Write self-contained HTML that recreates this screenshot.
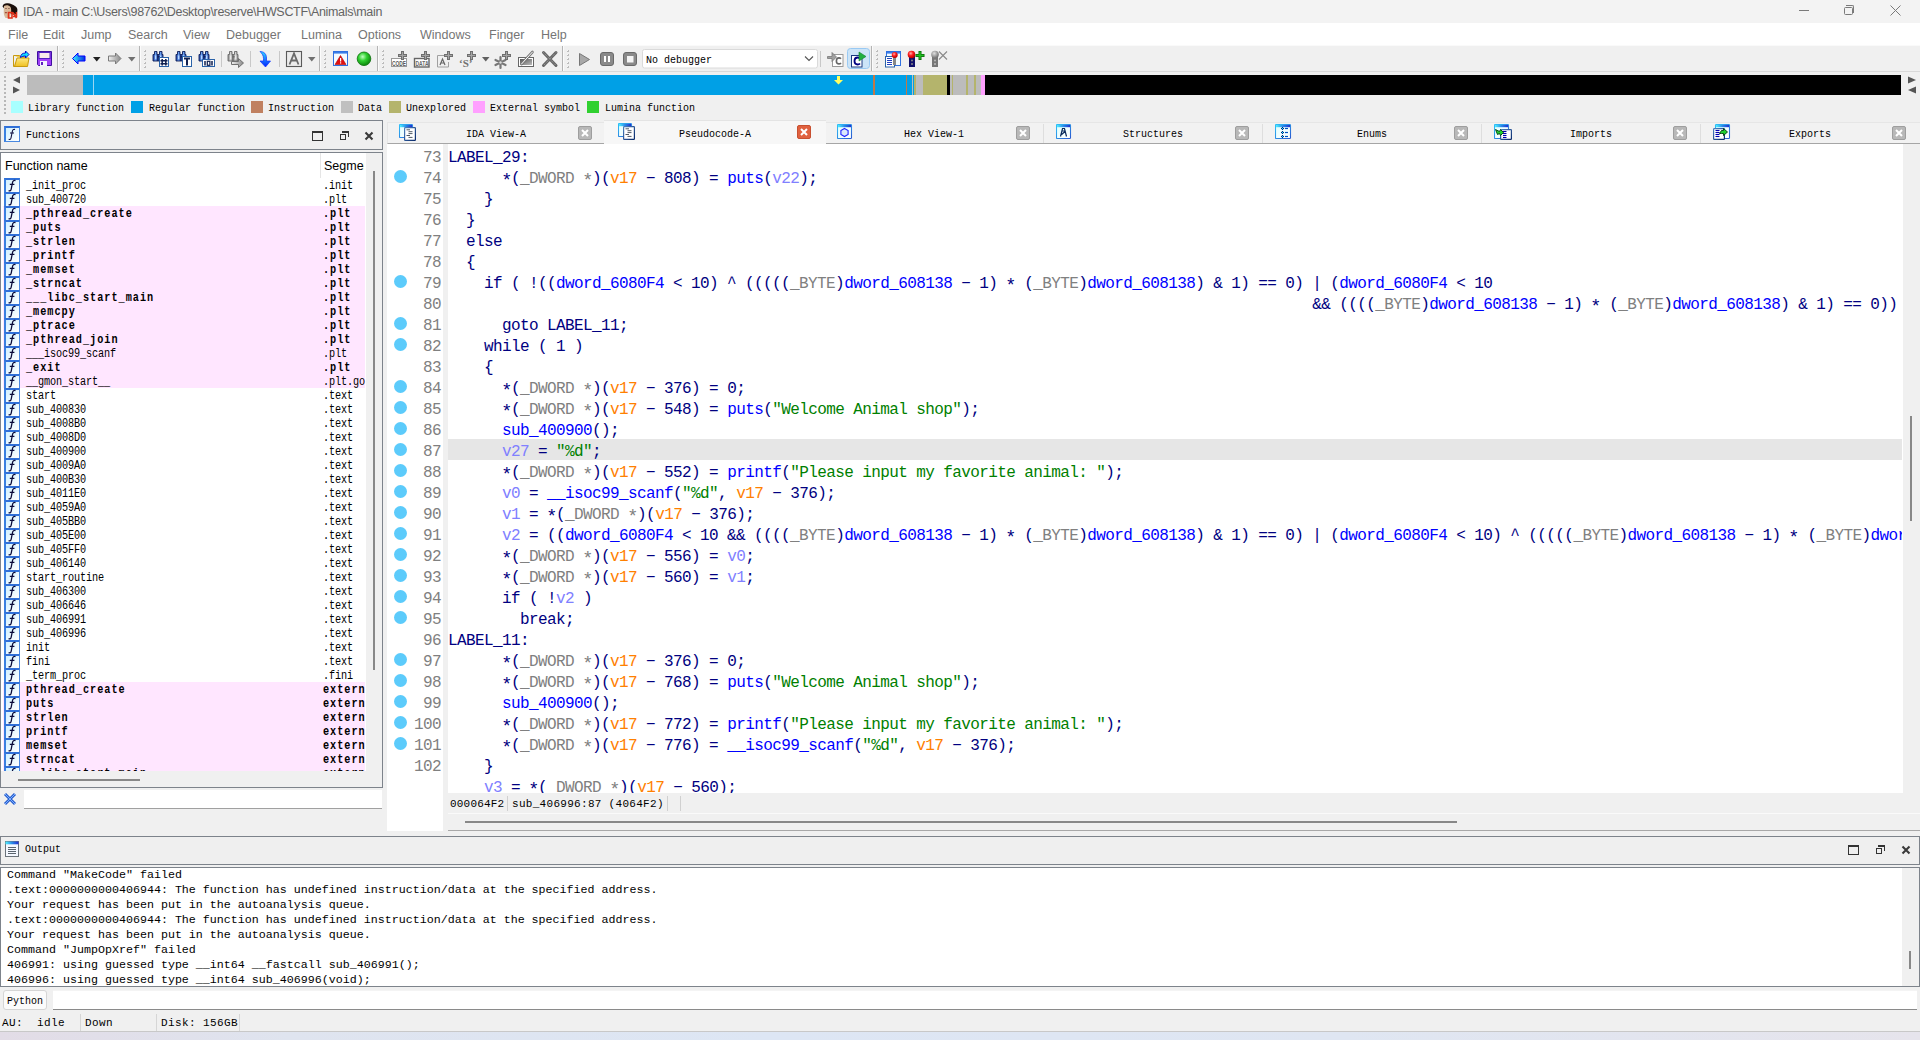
<!DOCTYPE html><html><head><meta charset="utf-8"><style>
*{margin:0;padding:0;box-sizing:border-box}
html,body{width:1920px;height:1040px;overflow:hidden;background:#f0f0f0;font-family:"Liberation Sans",sans-serif;position:relative}
div,span,svg{position:absolute}
.mono{font-family:"Liberation Mono",monospace}
.nw{white-space:nowrap}
#title{left:0;top:0;width:1920px;height:23px;background:#f3f3f3}
#menu{left:0;top:23px;width:1920px;height:22px;background:#fff}
#menu span{top:5px;font-size:12.5px;color:#757575;white-space:nowrap}
.sep{width:1px;background:#cfcfcf}
.hd{width:2px;background:repeating-linear-gradient(#b8b8b8 0 2px,transparent 2px 4px)}
.leg{top:101px;width:12px;height:12px}
.bm{font-family:"Liberation Mono",monospace;white-space:nowrap;color:#000}
.ln{left:389px;width:53px;text-align:right;font-size:16px;letter-spacing:-0.6px;color:#808080;font-family:"Liberation Mono",monospace;height:21px;line-height:21px}
.cl{left:448px;width:1454px;font-size:16px;letter-spacing:-0.6px;white-space:pre;font-family:"Liberation Mono",monospace;height:21px;line-height:21px;overflow:hidden;color:#000080}
.dot{left:394px;width:13px;height:13px;border-radius:50%;background:#5ccbfb}
.cl span{position:static}.cl i{position:static;font-style:normal}.st{display:inline-block;transform:translateY(2px) scale(1.15)}
.k{color:#000080}.f{color:#0000ff}.ty{color:#808080}.o{color:#ff8000}.v{color:#8080ff}.s{color:#008000}
.fr{left:3px;width:362px;height:14px}
.fi{left:4px;width:16px;height:15px;border:1px solid #4a88e0;background:linear-gradient(135deg,#d0f0ff,#ffffff);border-top:2px solid #3070d8;border-left:2px solid #3a80e0}
.fn{left:26px;top:1px;font-size:12px;line-height:14px;letter-spacing:-0.14px;transform:scaleX(0.85);transform-origin:0 0}
.fs{left:323px;top:1px;font-size:12px;line-height:14px;letter-spacing:-0.14px;transform:scaleX(0.85);transform-origin:0 0}
.b{font-weight:bold;letter-spacing:1.18px!important}
.tab{top:123px;height:21px;background:#f0f0f0;border-bottom:1px solid #a8a8a8}
.tabt{top:3px;font-size:12px;letter-spacing:-1.2px;font-weight:bold}
.cx{top:3px;width:14px;height:14px;border-radius:2px;background:#b9b9b9;border:1px solid #a4a4a4}
.out{left:7px;font-size:11.67px;font-family:"Liberation Mono",monospace;white-space:pre;color:#000;line-height:15px;height:15px}
</style></head><body>
<div id="title"></div>
<div style="left:23px;top:5px;font-size:12.5px;letter-spacing:-0.32px;color:#646464" class="nw">IDA - main C:\Users\98762\Desktop\reserve\HWSCTF\Animals\main</div>
<svg style="left:0;top:0" width="22" height="22" viewBox="0 0 22 22"><path d="M2.5 6.5C3 4 5 3 7.5 3.2 10 3 13 4.5 15 6c2 1 2.8 3 2.3 5.5-.3 2-1.5 3-2.5 3.5L8 13z" fill="#1a0e0a"/><path d="M4 6c2-1.5 5-1 6.5 1 1 2 .8 5 .2 7-.5 2-1 3.5-1.5 4H5.5C4 16 3.5 13 3.8 10z" fill="#d8b898"/><path d="M5 8.5h2M8 8.5h1.8" stroke="#9a7060" stroke-width="1"/><path d="M5 12.5c.6.3 1.2.3 1.8 0" stroke="#a04030" stroke-width="1.1"/><path d="M8.5 12.5h3.5v5.5H8.5zM13 12.5l3.5 5.5M13 16.5h3.5V12" stroke="#e03018" stroke-width="1.6" fill="none"/></svg>
<div style="left:1799px;top:10px;width:10px;height:1px;background:#7a7a7a"></div>
<div style="left:1844px;top:7px;width:9px;height:8px;border:1px solid #7a7a7a;border-radius:1.5px"></div>
<div style="left:1846px;top:5px;width:8px;height:8px;border-top:1px solid #7a7a7a;border-right:1px solid #7a7a7a;border-top-right-radius:2px"></div>
<svg style="left:1890px;top:5px" width="11" height="11"><path d="M0.5 0.5L10.5 10.5M10.5 0.5L0.5 10.5" stroke="#7a7a7a" stroke-width="1"/></svg>
<div id="menu">
<span style="left:8px">File</span>
<span style="left:43px">Edit</span>
<span style="left:81px">Jump</span>
<span style="left:128px">Search</span>
<span style="left:183px">View</span>
<span style="left:226px">Debugger</span>
<span style="left:301px">Lumina</span>
<span style="left:358px">Options</span>
<span style="left:420px">Windows</span>
<span style="left:489px">Finger</span>
<span style="left:541px">Help</span>
</div>
<div style="left:0;top:45px;width:1920px;height:27px;background:#f0f0f0;border-bottom:1px solid #d9d9d9"></div>
<div style="left:0;top:45px;width:1920px;height:1px;background:#fafafa"></div>
<svg width="0" height="0" style="left:0;top:0"><defs>
<linearGradient id="wTitle" x1="0" y1="0" x2="1" y2="0"><stop offset="0" stop-color="#50f0ff"/><stop offset="0.5" stop-color="#2a8ae8"/><stop offset="1" stop-color="#2030d0"/></linearGradient>
<linearGradient id="wBody" x1="0" y1="0" x2="1" y2="1"><stop offset="0" stop-color="#e0ffff"/><stop offset="1" stop-color="#ffffff"/></linearGradient>
<linearGradient id="wEdge" x1="0" y1="0" x2="1" y2="1"><stop offset="0" stop-color="#30c0f8"/><stop offset="1" stop-color="#2a5ad0"/></linearGradient>
<linearGradient id="dEdge" x1="0" y1="0" x2="1" y2="1"><stop offset="0" stop-color="#4a80c0"/><stop offset="1" stop-color="#0a2a6a"/></linearGradient>
</defs></svg>
<!--TOOLBAR-->
<svg style="left:0;top:0" width="960" height="75" viewBox="0 0 960 75"><defs>
<linearGradient id="gFold" x1="0" y1="0" x2="0" y2="1"><stop offset="0" stop-color="#fff4a0"/><stop offset="1" stop-color="#f0c020"/></linearGradient>
<linearGradient id="gBlue" x1="0" y1="0" x2="1" y2="0"><stop offset="0" stop-color="#40f0ff"/><stop offset="1" stop-color="#0030e0"/></linearGradient>
<linearGradient id="gGrey" x1="0" y1="0" x2="1" y2="0"><stop offset="0" stop-color="#f0f0f0"/><stop offset="1" stop-color="#888"/></linearGradient>
<linearGradient id="gBin2" x1="0" y1="0" x2="1" y2="0"><stop offset="0" stop-color="#1a3a9a"/><stop offset="0.5" stop-color="#6aa0f0"/><stop offset="1" stop-color="#1a3a9a"/></linearGradient><linearGradient id="gBinG" x1="0" y1="0" x2="1" y2="0"><stop offset="0" stop-color="#888"/><stop offset="0.5" stop-color="#d0d0d0"/><stop offset="1" stop-color="#888"/></linearGradient>
<linearGradient id="gDown" x1="0" y1="0" x2="0" y2="1"><stop offset="0" stop-color="#30e0ff"/><stop offset="1" stop-color="#0020ff"/></linearGradient>
<radialGradient id="gGreen" cx="0.4" cy="0.35" r="0.6"><stop offset="0" stop-color="#c0ffc0"/><stop offset="0.5" stop-color="#30d030"/><stop offset="1" stop-color="#109010"/></radialGradient>
<radialGradient id="gRed" cx="0.4" cy="0.35" r="0.6"><stop offset="0" stop-color="#ffb0b0"/><stop offset="0.5" stop-color="#ff2020"/><stop offset="1" stop-color="#c00000"/></radialGradient>
<radialGradient id="gGb" cx="0.4" cy="0.35" r="0.6"><stop offset="0" stop-color="#e0e0e0"/><stop offset="1" stop-color="#777"/></radialGradient>
<linearGradient id="gPen" x1="0" y1="0" x2="1" y2="1"><stop offset="0" stop-color="#555"/><stop offset="1" stop-color="#bbb"/></linearGradient>
</defs><rect x="57.0" y="46" width="1" height="25" fill="#b4b4b4"/><rect x="58.0" y="46" width="1" height="25" fill="#fbfbfb"/><rect x="139.0" y="46" width="1" height="25" fill="#b4b4b4"/><rect x="140.0" y="46" width="1" height="25" fill="#fbfbfb"/><rect x="319.0" y="46" width="1" height="25" fill="#b4b4b4"/><rect x="320.0" y="46" width="1" height="25" fill="#fbfbfb"/><rect x="377.0" y="46" width="1" height="25" fill="#b4b4b4"/><rect x="378.0" y="46" width="1" height="25" fill="#fbfbfb"/><rect x="562.0" y="46" width="1" height="25" fill="#b4b4b4"/><rect x="563.0" y="46" width="1" height="25" fill="#fbfbfb"/><rect x="871.0" y="46" width="1" height="25" fill="#b4b4b4"/><rect x="872.0" y="46" width="1" height="25" fill="#fbfbfb"/><rect x="221.0" y="51" width="1" height="16" fill="#c8c8c8"/><rect x="250.0" y="51" width="1" height="16" fill="#c8c8c8"/><rect x="279.0" y="51" width="1" height="16" fill="#c8c8c8"/><rect x="820.0" y="51" width="1" height="16" fill="#c8c8c8"/><rect x="4" y="50" width="2" height="2" fill="#bcbcbc"/><rect x="4" y="50" width="1" height="1" fill="#f8f8f8"/><rect x="4" y="54" width="2" height="2" fill="#bcbcbc"/><rect x="4" y="54" width="1" height="1" fill="#f8f8f8"/><rect x="4" y="58" width="2" height="2" fill="#bcbcbc"/><rect x="4" y="58" width="1" height="1" fill="#f8f8f8"/><rect x="4" y="62" width="2" height="2" fill="#bcbcbc"/><rect x="4" y="62" width="1" height="1" fill="#f8f8f8"/><rect x="4" y="66" width="2" height="2" fill="#bcbcbc"/><rect x="4" y="66" width="1" height="1" fill="#f8f8f8"/><rect x="62" y="50" width="2" height="2" fill="#bcbcbc"/><rect x="62" y="50" width="1" height="1" fill="#f8f8f8"/><rect x="62" y="54" width="2" height="2" fill="#bcbcbc"/><rect x="62" y="54" width="1" height="1" fill="#f8f8f8"/><rect x="62" y="58" width="2" height="2" fill="#bcbcbc"/><rect x="62" y="58" width="1" height="1" fill="#f8f8f8"/><rect x="62" y="62" width="2" height="2" fill="#bcbcbc"/><rect x="62" y="62" width="1" height="1" fill="#f8f8f8"/><rect x="62" y="66" width="2" height="2" fill="#bcbcbc"/><rect x="62" y="66" width="1" height="1" fill="#f8f8f8"/><rect x="144" y="50" width="2" height="2" fill="#bcbcbc"/><rect x="144" y="50" width="1" height="1" fill="#f8f8f8"/><rect x="144" y="54" width="2" height="2" fill="#bcbcbc"/><rect x="144" y="54" width="1" height="1" fill="#f8f8f8"/><rect x="144" y="58" width="2" height="2" fill="#bcbcbc"/><rect x="144" y="58" width="1" height="1" fill="#f8f8f8"/><rect x="144" y="62" width="2" height="2" fill="#bcbcbc"/><rect x="144" y="62" width="1" height="1" fill="#f8f8f8"/><rect x="144" y="66" width="2" height="2" fill="#bcbcbc"/><rect x="144" y="66" width="1" height="1" fill="#f8f8f8"/><rect x="324" y="50" width="2" height="2" fill="#bcbcbc"/><rect x="324" y="50" width="1" height="1" fill="#f8f8f8"/><rect x="324" y="54" width="2" height="2" fill="#bcbcbc"/><rect x="324" y="54" width="1" height="1" fill="#f8f8f8"/><rect x="324" y="58" width="2" height="2" fill="#bcbcbc"/><rect x="324" y="58" width="1" height="1" fill="#f8f8f8"/><rect x="324" y="62" width="2" height="2" fill="#bcbcbc"/><rect x="324" y="62" width="1" height="1" fill="#f8f8f8"/><rect x="324" y="66" width="2" height="2" fill="#bcbcbc"/><rect x="324" y="66" width="1" height="1" fill="#f8f8f8"/><rect x="382" y="50" width="2" height="2" fill="#bcbcbc"/><rect x="382" y="50" width="1" height="1" fill="#f8f8f8"/><rect x="382" y="54" width="2" height="2" fill="#bcbcbc"/><rect x="382" y="54" width="1" height="1" fill="#f8f8f8"/><rect x="382" y="58" width="2" height="2" fill="#bcbcbc"/><rect x="382" y="58" width="1" height="1" fill="#f8f8f8"/><rect x="382" y="62" width="2" height="2" fill="#bcbcbc"/><rect x="382" y="62" width="1" height="1" fill="#f8f8f8"/><rect x="382" y="66" width="2" height="2" fill="#bcbcbc"/><rect x="382" y="66" width="1" height="1" fill="#f8f8f8"/><rect x="567" y="50" width="2" height="2" fill="#bcbcbc"/><rect x="567" y="50" width="1" height="1" fill="#f8f8f8"/><rect x="567" y="54" width="2" height="2" fill="#bcbcbc"/><rect x="567" y="54" width="1" height="1" fill="#f8f8f8"/><rect x="567" y="58" width="2" height="2" fill="#bcbcbc"/><rect x="567" y="58" width="1" height="1" fill="#f8f8f8"/><rect x="567" y="62" width="2" height="2" fill="#bcbcbc"/><rect x="567" y="62" width="1" height="1" fill="#f8f8f8"/><rect x="567" y="66" width="2" height="2" fill="#bcbcbc"/><rect x="567" y="66" width="1" height="1" fill="#f8f8f8"/><rect x="876" y="50" width="2" height="2" fill="#bcbcbc"/><rect x="876" y="50" width="1" height="1" fill="#f8f8f8"/><rect x="876" y="54" width="2" height="2" fill="#bcbcbc"/><rect x="876" y="54" width="1" height="1" fill="#f8f8f8"/><rect x="876" y="58" width="2" height="2" fill="#bcbcbc"/><rect x="876" y="58" width="1" height="1" fill="#f8f8f8"/><rect x="876" y="62" width="2" height="2" fill="#bcbcbc"/><rect x="876" y="62" width="1" height="1" fill="#f8f8f8"/><rect x="876" y="66" width="2" height="2" fill="#bcbcbc"/><rect x="876" y="66" width="1" height="1" fill="#f8f8f8"/><path d="M13.5 55.5h6l1 1.5h5v3" fill="#f4d050" stroke="#c89a10"/><path d="M13.5 55.5v11h14l1.5-8.5h-12l-2.5 8.5" fill="url(#gFold)" stroke="#c89a10" stroke-linejoin="round"/><path d="M20.5 57.5c0-3 2-4.5 5-4.5v-2l3.5 3.5-3.5 3.5v-2c-2 0-3.5 .5-5 1.5z" fill="#10e0ff" stroke="#0010d0" stroke-width="1"/><path d="M37.5 51.5h14v14h-13l-1-1z" fill="#a040f8" stroke="#4010a0"/><rect x="39" y="52.5" width="11" height="6" fill="#f8eaea" stroke="#5020c0" stroke-width="1"/><rect x="40" y="61" width="7" height="5" fill="#f4f4ff"/><rect x="41" y="62" width="2" height="3" fill="#6020c0"/><path d="M72.5 58.5l5.5-5.5v3h7v5h-7v3z" fill="url(#gBlue)" stroke="#0000ff" stroke-linejoin="miter"/><path d="M93 57h7.5l-3.75 4.5z" fill="#202020"/><path d="M128 57h7.5l-3.75 4.5z" fill="#707070"/><path d="M308 57h7.5l-3.75 4.5z" fill="#707070"/><path d="M482 57h7.5l-3.75 4.5z" fill="#606060"/><path d="M121 58.5l-5.5-5.5v3h-7v5h7v3z" fill="url(#gGrey)" stroke="#7a7a7a"/><path d="M154.5 51.5h2.5v3h1v6.5h-5v-6.5h1.5z" fill="url(#gBin2)" stroke="#10205a" stroke-width="0.9" stroke-linejoin="round"/><rect x="155" y="55.5" width="1.3" height="3.5" fill="#b8d8ff"/><path d="M159.5 51.5h2.5v3h1v6.5h-5v-6.5h1.5z" fill="url(#gBin2)" stroke="#10205a" stroke-width="0.9" stroke-linejoin="round"/><rect x="160" y="55.5" width="1.3" height="3.5" fill="#b8d8ff"/><rect x="157.5" y="56" width="2" height="1.5" fill="#10205a"/><rect x="159.5" y="57.5" width="9" height="9" fill="#fff" stroke="#2a62a8"/><path d="M162.2 59v6.5M165.8 59v6.5M160.5 60.8h7M160.5 63.7h7" stroke="#102050" stroke-width="1.5"/><path d="M177.5 51.5h2.5v3h1v6.5h-5v-6.5h1.5z" fill="url(#gBin2)" stroke="#10205a" stroke-width="0.9" stroke-linejoin="round"/><rect x="178" y="55.5" width="1.3" height="3.5" fill="#b8d8ff"/><path d="M182.5 51.5h2.5v3h1v6.5h-5v-6.5h1.5z" fill="url(#gBin2)" stroke="#10205a" stroke-width="0.9" stroke-linejoin="round"/><rect x="183" y="55.5" width="1.3" height="3.5" fill="#b8d8ff"/><rect x="180.5" y="56" width="2" height="1.5" fill="#10205a"/><rect x="182.5" y="56.5" width="9" height="10" fill="#fff" stroke="#2a62a8"/><path d="M184 58.5h6M187 58.5v7" stroke="#102050" stroke-width="2"/><path d="M200.5 51.5h2.5v3h1v6.5h-5v-6.5h1.5z" fill="url(#gBin2)" stroke="#10205a" stroke-width="0.9" stroke-linejoin="round"/><rect x="201" y="55.5" width="1.3" height="3.5" fill="#b8d8ff"/><path d="M205.5 51.5h2.5v3h1v6.5h-5v-6.5h1.5z" fill="url(#gBin2)" stroke="#10205a" stroke-width="0.9" stroke-linejoin="round"/><rect x="206" y="55.5" width="1.3" height="3.5" fill="#b8d8ff"/><rect x="203.5" y="56" width="2" height="1.5" fill="#10205a"/><rect x="202.5" y="59.5" width="12" height="7" fill="#fff" stroke="#2a62a8"/><path d="M205 61v4.5M212 61v4.5" stroke="#102050" stroke-width="1.5"/><rect x="207.3" y="61.3" width="2.6" height="4" fill="none" stroke="#102050" stroke-width="1.2"/><path d="M229.5 51.5h2.5v3h1v6.5h-5v-6.5h1.5z" fill="url(#gBinG)" stroke="#6a6a6a" stroke-width="0.9" stroke-linejoin="round"/><rect x="230" y="55.5" width="1.3" height="3.5" fill="#e8e8e8"/><path d="M234.5 51.5h2.5v3h1v6.5h-5v-6.5h1.5z" fill="url(#gBinG)" stroke="#6a6a6a" stroke-width="0.9" stroke-linejoin="round"/><rect x="235" y="55.5" width="1.3" height="3.5" fill="#e8e8e8"/><rect x="232.5" y="56" width="2" height="1.5" fill="#6a6a6a"/><path d="M231.5 61.5h7v-3l5 4.5-5 4.5v-3h-7z" fill="url(#gGrey)" stroke="#707070"/><path d="M260 51.5c4 0 6.5 2.5 6.5 6.5v3h4l-5 6-5.5-6h3.5v-2.5c0-3-1.5-5-3.5-7z" fill="url(#gDown)" stroke="#1030ff" stroke-width="0.7"/><rect x="286.5" y="51.5" width="15" height="15" fill="#ececec" stroke="#5a5a5a" stroke-width="1.1"/><path d="M289.5 64.5l4.5-11 4.5 11M291.2 60.5h5.6" stroke="#6a6a6a" stroke-width="1.8" fill="none"/><rect x="333.5" y="51.5" width="14" height="14" fill="#f4fbff" stroke="#3070e0"/><rect x="334" y="52" width="13" height="1.6" fill="#3a7ee8"/><path d="M335 64.5l5.5-9 5.5 9z" fill="#e01010" stroke="#b00000" stroke-width="0.6"/><rect x="340" y="58" width="1.2" height="3.5" fill="#fff"/><rect x="340" y="62.3" width="1.2" height="1.2" fill="#fff"/><circle cx="364" cy="58.8" r="6.8" fill="url(#gGreen)" stroke="#0a700a" stroke-width="0.8"/><rect x="391.5" y="58.5" width="15" height="8" fill="#fff" stroke="#9a9a9a"/><text x="392" y="65.5" font-family="Liberation Sans" font-weight="bold" font-size="7" fill="#555" textLength="14" lengthAdjust="spacingAndGlyphs">CODE</text><path d="M402.5 51.0v9M398.0 55.5h9" stroke="#6e6e6e" stroke-width="3"/><path d="M402.5 51.9v7.2M398.9 55.5h7.2" stroke="#a4a4a4" stroke-width="1.1"/><rect x="414.5" y="58.5" width="14.5" height="8.5" fill="#fff" stroke="#666" stroke-width="1.4"/><text x="415.5" y="65.5" font-family="Liberation Sans" font-weight="bold" font-size="7" fill="#666" textLength="13" lengthAdjust="spacingAndGlyphs">DATA</text><path d="M425.5 51.0v9M421.0 55.5h9" stroke="#6e6e6e" stroke-width="3"/><path d="M425.5 51.9v7.2M421.9 55.5h7.2" stroke="#a4a4a4" stroke-width="1.1"/><path d="M446.5 55.5h-9v11.5h11v-5" fill="none" stroke="#a0a0a0"/><path d="M440 65l2.5-6 2.5 6M441 63h3" stroke="#666" stroke-width="1.2" fill="none"/><path d="M448.5 51.0v9M444.0 55.5h9" stroke="#6e6e6e" stroke-width="3"/><path d="M448.5 51.9v7.2M444.9 55.5h7.2" stroke="#a4a4a4" stroke-width="1.1"/><text x="459" y="67" font-family="Liberation Serif" font-weight="bold" font-size="11" fill="#707070">‘S’</text><path d="M471.5 51.0v9M467.0 55.5h9" stroke="#6e6e6e" stroke-width="3"/><path d="M471.5 51.9v7.2M467.9 55.5h7.2" stroke="#a4a4a4" stroke-width="1.1"/><g stroke="#777" stroke-width="2.2" stroke-linecap="round"><path d="M500.5 57v11M495.5 60l10 5M495.5 65l10-5"/></g><circle cx="500.5" cy="62.5" r="1.2" fill="#ddd"/><path d="M506.5 51.0v9M502.0 55.5h9" stroke="#6e6e6e" stroke-width="3"/><path d="M506.5 51.9v7.2M502.9 55.5h7.2" stroke="#a4a4a4" stroke-width="1.1"/><rect x="518.5" y="57.5" width="15" height="9" fill="#fff" stroke="#666"/><rect x="520" y="59" width="12" height="6" fill="url(#gPen)"/><path d="M521.5 64l11-12" stroke="#777" stroke-width="2.6" stroke-linecap="round"/><path d="M521.5 64l11-12" stroke="#fff" stroke-width="1" stroke-linecap="round"/><path d="M543.5 52.5l12.5 13M556 52.5l-12.5 13" stroke="#666" stroke-width="3" stroke-linecap="round"/><path d="M543.5 52.5l12.5 13M556 52.5l-12.5 13" stroke="#aaa" stroke-width="1" stroke-dasharray="1 1"/><path d="M579.5 53.5v12l10-6z" fill="#a8a8a8" stroke="#777"/><rect x="600.5" y="52.5" width="13" height="13" rx="2.5" fill="#8a8a8a" stroke="#6a6a6a"/><rect x="604" y="56" width="2" height="6" fill="#fff"/><rect x="608" y="56" width="2" height="6" fill="#fff"/><rect x="623.5" y="52.5" width="13" height="13" rx="2.5" fill="#8a8a8a" stroke="#6a6a6a"/><rect x="627" y="56" width="6.5" height="6.5" fill="#f4f4f4"/><rect x="642.5" y="49.5" width="175" height="18.5" rx="2" fill="#fff" stroke="#dadada"/><path d="M805 56.5l4 4 4-4" stroke="#555" stroke-width="1.1" fill="none"/><rect x="832.5" y="54.5" width="10.5" height="12" fill="#fff" stroke="#9a9a9a"/><path d="M841 58.8c-.5-.6-1.2-.9-2-.9-1.6 0-2.6 1.2-2.6 3s1 3 2.6 3c.8 0 1.5-.3 2-.9" stroke="#666" stroke-width="1.6" fill="none"/><path d="M827.5 56.5h4.5v-4l4.5 4.5-4.5 4.5v-3h-4.5z" fill="#a0a0a0" stroke="#777" stroke-width="0.8"/><rect x="847.5" y="48.5" width="22" height="20" rx="3" fill="#cce4f7" stroke="#99c9f3"/><rect x="851.5" y="55.5" width="10.5" height="11.5" fill="#fff" stroke="#1a3a80"/><path d="M860 58.5c-.6-.7-1.4-1-2.4-1-1.9 0-3.1 1.4-3.1 3.5s1.2 3.5 3.1 3.5c1 0 1.8-.3 2.4-1" stroke="#000080" stroke-width="1.8" fill="none"/><path d="M859 52v9l7-4.5z" fill="#20b040" stroke="#108030" stroke-width="0.6"/><rect x="886.5" y="51.5" width="14" height="14" fill="#f4fbff" stroke="#3070e0"/><rect x="887" y="52" width="13" height="1.6" fill="#3a7ee8"/><rect x="885.5" y="56.5" width="9" height="10.5" fill="#fff" stroke="#2a62a8"/><path d="M887 58.5h5M887 60.5h5M887 62.5h5M887 64.5h5" stroke="#2040c0" stroke-width="1"/><rect x="893" y="57" width="3" height="8" fill="#888"/><circle cx="894.7" cy="55" r="3" fill="url(#gRed)"/><rect x="909" y="56" width="6" height="11" fill="#10106a"/><circle cx="912" cy="60.5" r="1" fill="#888"/><circle cx="912" cy="64" r="1" fill="#888"/><circle cx="911.5" cy="54.5" r="3.8" fill="url(#gRed)"/><path d="M920 51v9M915.5 55.5h9" stroke="#0a6a0a" stroke-width="3"/><path d="M920 51.8v7.4M916.3 55.5h7.4" stroke="#20c020" stroke-width="1.4"/><rect x="932" y="56" width="6" height="11" fill="#777"/><circle cx="935" cy="60.5" r="1" fill="#bbb"/><circle cx="935" cy="64" r="1" fill="#bbb"/><circle cx="935" cy="54.5" r="3.8" fill="url(#gGb)"/><path d="M939 51.5l8 8M947 51.5l-8 8" stroke="#888" stroke-width="1.1"/></svg>
<div class="bm" style="left:646px;top:52px;font-size:11.5px;letter-spacing:0px;transform:scaleX(0.87);transform-origin:0 0;line-height:16px">No debugger</div>
<div style="left:27px;top:75px;width:1874px;height:20px;background:#000"></div>
<div style="left:27px;top:75px;width:56px;height:20px;background:#bcbcbc"></div>
<div style="left:83px;top:75px;width:829px;height:20px;background:#00a0e6"></div>
<div style="left:913px;top:75px;width:1px;height:20px;background:#00a0e6"></div>
<div style="left:93px;top:75px;width:1px;height:20px;background:#9ad6f2"></div>
<div style="left:873px;top:75px;width:2px;height:20px;background:#c07848"></div>
<div style="left:906px;top:75px;width:1px;height:20px;background:#c07848"></div>
<div style="left:912px;top:75px;width:1px;height:20px;background:#bcbcbc"></div>
<div style="left:914px;top:75px;width:2px;height:20px;background:#b4b46c"></div>
<div style="left:916px;top:75px;width:7px;height:20px;background:#bcbcbc"></div>
<div style="left:923px;top:75px;width:24px;height:20px;background:#b4b46c"></div>
<div style="left:947px;top:75px;width:3px;height:20px;background:#000"></div>
<div style="left:950px;top:75px;width:2px;height:20px;background:#bcbcbc"></div>
<div style="left:952px;top:75px;width:1px;height:20px;background:#b4b46c"></div>
<div style="left:953px;top:75px;width:13px;height:20px;background:#bcbcbc"></div>
<div style="left:966px;top:75px;width:2px;height:20px;background:#b4b46c"></div>
<div style="left:968px;top:75px;width:6px;height:20px;background:#bcbcbc"></div>
<div style="left:974px;top:75px;width:2px;height:20px;background:#b4b46c"></div>
<div style="left:976px;top:75px;width:5px;height:20px;background:#bcbcbc"></div>
<div style="left:981px;top:75px;width:4px;height:20px;background:#ffa0ff"></div>
<svg style="left:834px;top:76px" width="9" height="9"><path d="M3 0h3v4h3l-4.5 4.5L0 4h3z" fill="#ffff60"/></svg>
<svg style="left:12px;top:76px" width="9" height="19"><path d="M8 0.5v7L1 4z" fill="#555"/><path d="M1 10.5v7l7-3.5z" fill="#555"/></svg>
<svg style="left:1907px;top:76px" width="10" height="19"><path d="M1 0.5v7l8-3.5z" fill="#555"/><path d="M9 10.5v7L1 14z" fill="#555"/></svg>
<div class="hd" style="left:4px;top:76px;height:40px"></div>
<div class="leg" style="left:11px;background:#a8ffff"></div>
<div class="bm" style="left:28px;top:100px;font-size:11.5px;letter-spacing:0px;transform:scaleX(0.87);transform-origin:0 0;line-height:16px">Library function</div>
<div class="leg" style="left:131px;background:#00a0e6"></div>
<div class="bm" style="left:149px;top:100px;font-size:11.5px;letter-spacing:0px;transform:scaleX(0.87);transform-origin:0 0;line-height:16px">Regular function</div>
<div class="leg" style="left:251px;background:#c08060"></div>
<div class="bm" style="left:268px;top:100px;font-size:11.5px;letter-spacing:0px;transform:scaleX(0.87);transform-origin:0 0;line-height:16px">Instruction</div>
<div class="leg" style="left:341px;background:#c0c0c0"></div>
<div class="bm" style="left:358px;top:100px;font-size:11.5px;letter-spacing:0px;transform:scaleX(0.87);transform-origin:0 0;line-height:16px">Data</div>
<div class="leg" style="left:389px;background:#b4b46c"></div>
<div class="bm" style="left:406px;top:100px;font-size:11.5px;letter-spacing:0px;transform:scaleX(0.87);transform-origin:0 0;line-height:16px">Unexplored</div>
<div class="leg" style="left:473px;background:#ffa0ff"></div>
<div class="bm" style="left:490px;top:100px;font-size:11.5px;letter-spacing:0px;transform:scaleX(0.87);transform-origin:0 0;line-height:16px">External symbol</div>
<div class="leg" style="left:587px;background:#30d030"></div>
<div class="bm" style="left:605px;top:100px;font-size:11.5px;letter-spacing:0px;transform:scaleX(0.87);transform-origin:0 0;line-height:16px">Lumina function</div>
<div style="left:0;top:120px;width:383px;height:30px;background:#efefef;border:1px solid #7d838b"></div>
<div class="fi" style="left:4px;top:126px;width:16px;height:16px"></div>
<svg style="left:4px;top:126px" width="16" height="16"><path d="M11 3.5c-1.5-.5-2.3.3-2.6 1.6L7 12c-.3 1.3-1 1.8-2.3 1.4M6 7h4" stroke="#101040" stroke-width="1.1" fill="none"/></svg>
<div class="bm" style="left:26px;top:127px;font-size:11.5px;letter-spacing:0px;transform:scaleX(0.87);transform-origin:0 0;line-height:16px">Functions</div>
<div style="left:312px;top:131px;width:11px;height:10px;border:1px solid #333;border-top:2px solid #333"></div>
<div style="left:340px;top:134px;width:6px;height:6px;border:1px solid #333"></div>
<div style="left:342px;top:131px;width:7px;height:6px;border-top:2px solid #333;border-right:1px solid #333"></div>
<svg style="left:364px;top:131px" width="10" height="10"><path d="M1.5 1.5L8.5 8.5M8.5 1.5L1.5 8.5" stroke="#3a3a3a" stroke-width="2.1"/></svg>
<div style="left:0;top:152px;width:383px;height:636px;background:#fff;border:1px solid #7d838b"></div>
<div style="left:366px;top:153px;width:16px;height:634px;background:#f0f0f0"></div>
<div style="left:373px;top:171px;width:2px;height:499px;background:#888"></div>
<div style="left:320px;top:153px;width:1px;height:25px;background:#e5e5e5"></div>
<div style="left:5px;top:158px;font-size:12.5px;color:#000;line-height:16px" class="nw">Function name</div>
<div style="left:324px;top:158px;width:40px;overflow:hidden;font-size:12.5px;color:#000;line-height:16px" class="nw">Segment</div>
<div style="left:1px;top:178px;width:365px;height:593px;overflow:hidden">
<div class="fr" style="left:2px;top:0px;"></div>
<div class="fi" style="left:3px;top:0px"></div>
<svg style="left:3px;top:0px" width="16" height="15"><path d="M11.5 2.6c-1.6-.5-2.6.2-2.9 1.6L7.2 11.2c-.3 1.4-1.1 1.9-2.6 1.4M5.8 6.3h4.6" stroke="#0a0a3a" stroke-width="1.25" fill="none"/></svg>
<div class="bm fn" style="left:25px;top:1px">_init_proc</div>
<div class="bm fs" style="left:322px;top:1px">.init</div>
<div class="fr" style="left:2px;top:14px;"></div>
<div class="fi" style="left:3px;top:14px"></div>
<svg style="left:3px;top:14px" width="16" height="15"><path d="M11.5 2.6c-1.6-.5-2.6.2-2.9 1.6L7.2 11.2c-.3 1.4-1.1 1.9-2.6 1.4M5.8 6.3h4.6" stroke="#0a0a3a" stroke-width="1.25" fill="none"/></svg>
<div class="bm fn" style="left:25px;top:15px">sub_400720</div>
<div class="bm fs" style="left:322px;top:15px">.plt</div>
<div class="fr" style="left:2px;top:28px;background:#ffe6ff;"></div>
<div class="fi" style="left:3px;top:28px"></div>
<svg style="left:3px;top:28px" width="16" height="15"><path d="M11.5 2.6c-1.6-.5-2.6.2-2.9 1.6L7.2 11.2c-.3 1.4-1.1 1.9-2.6 1.4M5.8 6.3h4.6" stroke="#0a0a3a" stroke-width="1.25" fill="none"/></svg>
<div class="bm fn b" style="left:25px;top:29px">_pthread_create</div>
<div class="bm fs b" style="left:322px;top:29px">.plt</div>
<div class="fr" style="left:2px;top:42px;background:#ffe6ff;"></div>
<div class="fi" style="left:3px;top:42px"></div>
<svg style="left:3px;top:42px" width="16" height="15"><path d="M11.5 2.6c-1.6-.5-2.6.2-2.9 1.6L7.2 11.2c-.3 1.4-1.1 1.9-2.6 1.4M5.8 6.3h4.6" stroke="#0a0a3a" stroke-width="1.25" fill="none"/></svg>
<div class="bm fn b" style="left:25px;top:43px">_puts</div>
<div class="bm fs b" style="left:322px;top:43px">.plt</div>
<div class="fr" style="left:2px;top:56px;background:#ffe6ff;"></div>
<div class="fi" style="left:3px;top:56px"></div>
<svg style="left:3px;top:56px" width="16" height="15"><path d="M11.5 2.6c-1.6-.5-2.6.2-2.9 1.6L7.2 11.2c-.3 1.4-1.1 1.9-2.6 1.4M5.8 6.3h4.6" stroke="#0a0a3a" stroke-width="1.25" fill="none"/></svg>
<div class="bm fn b" style="left:25px;top:57px">_strlen</div>
<div class="bm fs b" style="left:322px;top:57px">.plt</div>
<div class="fr" style="left:2px;top:70px;background:#ffe6ff;"></div>
<div class="fi" style="left:3px;top:70px"></div>
<svg style="left:3px;top:70px" width="16" height="15"><path d="M11.5 2.6c-1.6-.5-2.6.2-2.9 1.6L7.2 11.2c-.3 1.4-1.1 1.9-2.6 1.4M5.8 6.3h4.6" stroke="#0a0a3a" stroke-width="1.25" fill="none"/></svg>
<div class="bm fn b" style="left:25px;top:71px">_printf</div>
<div class="bm fs b" style="left:322px;top:71px">.plt</div>
<div class="fr" style="left:2px;top:84px;background:#ffe6ff;"></div>
<div class="fi" style="left:3px;top:84px"></div>
<svg style="left:3px;top:84px" width="16" height="15"><path d="M11.5 2.6c-1.6-.5-2.6.2-2.9 1.6L7.2 11.2c-.3 1.4-1.1 1.9-2.6 1.4M5.8 6.3h4.6" stroke="#0a0a3a" stroke-width="1.25" fill="none"/></svg>
<div class="bm fn b" style="left:25px;top:85px">_memset</div>
<div class="bm fs b" style="left:322px;top:85px">.plt</div>
<div class="fr" style="left:2px;top:98px;background:#ffe6ff;"></div>
<div class="fi" style="left:3px;top:98px"></div>
<svg style="left:3px;top:98px" width="16" height="15"><path d="M11.5 2.6c-1.6-.5-2.6.2-2.9 1.6L7.2 11.2c-.3 1.4-1.1 1.9-2.6 1.4M5.8 6.3h4.6" stroke="#0a0a3a" stroke-width="1.25" fill="none"/></svg>
<div class="bm fn b" style="left:25px;top:99px">_strncat</div>
<div class="bm fs b" style="left:322px;top:99px">.plt</div>
<div class="fr" style="left:2px;top:112px;background:#ffe6ff;"></div>
<div class="fi" style="left:3px;top:112px"></div>
<svg style="left:3px;top:112px" width="16" height="15"><path d="M11.5 2.6c-1.6-.5-2.6.2-2.9 1.6L7.2 11.2c-.3 1.4-1.1 1.9-2.6 1.4M5.8 6.3h4.6" stroke="#0a0a3a" stroke-width="1.25" fill="none"/></svg>
<div class="bm fn b" style="left:25px;top:113px">___libc_start_main</div>
<div class="bm fs b" style="left:322px;top:113px">.plt</div>
<div class="fr" style="left:2px;top:126px;background:#ffe6ff;"></div>
<div class="fi" style="left:3px;top:126px"></div>
<svg style="left:3px;top:126px" width="16" height="15"><path d="M11.5 2.6c-1.6-.5-2.6.2-2.9 1.6L7.2 11.2c-.3 1.4-1.1 1.9-2.6 1.4M5.8 6.3h4.6" stroke="#0a0a3a" stroke-width="1.25" fill="none"/></svg>
<div class="bm fn b" style="left:25px;top:127px">_memcpy</div>
<div class="bm fs b" style="left:322px;top:127px">.plt</div>
<div class="fr" style="left:2px;top:140px;background:#ffe6ff;"></div>
<div class="fi" style="left:3px;top:140px"></div>
<svg style="left:3px;top:140px" width="16" height="15"><path d="M11.5 2.6c-1.6-.5-2.6.2-2.9 1.6L7.2 11.2c-.3 1.4-1.1 1.9-2.6 1.4M5.8 6.3h4.6" stroke="#0a0a3a" stroke-width="1.25" fill="none"/></svg>
<div class="bm fn b" style="left:25px;top:141px">_ptrace</div>
<div class="bm fs b" style="left:322px;top:141px">.plt</div>
<div class="fr" style="left:2px;top:154px;background:#ffe6ff;"></div>
<div class="fi" style="left:3px;top:154px"></div>
<svg style="left:3px;top:154px" width="16" height="15"><path d="M11.5 2.6c-1.6-.5-2.6.2-2.9 1.6L7.2 11.2c-.3 1.4-1.1 1.9-2.6 1.4M5.8 6.3h4.6" stroke="#0a0a3a" stroke-width="1.25" fill="none"/></svg>
<div class="bm fn b" style="left:25px;top:155px">_pthread_join</div>
<div class="bm fs b" style="left:322px;top:155px">.plt</div>
<div class="fr" style="left:2px;top:168px;background:#ffe6ff;"></div>
<div class="fi" style="left:3px;top:168px"></div>
<svg style="left:3px;top:168px" width="16" height="15"><path d="M11.5 2.6c-1.6-.5-2.6.2-2.9 1.6L7.2 11.2c-.3 1.4-1.1 1.9-2.6 1.4M5.8 6.3h4.6" stroke="#0a0a3a" stroke-width="1.25" fill="none"/></svg>
<div class="bm fn" style="left:25px;top:169px">___isoc99_scanf</div>
<div class="bm fs" style="left:322px;top:169px">.plt</div>
<div class="fr" style="left:2px;top:182px;background:#ffe6ff;"></div>
<div class="fi" style="left:3px;top:182px"></div>
<svg style="left:3px;top:182px" width="16" height="15"><path d="M11.5 2.6c-1.6-.5-2.6.2-2.9 1.6L7.2 11.2c-.3 1.4-1.1 1.9-2.6 1.4M5.8 6.3h4.6" stroke="#0a0a3a" stroke-width="1.25" fill="none"/></svg>
<div class="bm fn b" style="left:25px;top:183px">_exit</div>
<div class="bm fs b" style="left:322px;top:183px">.plt</div>
<div class="fr" style="left:2px;top:196px;background:#ffe6ff;"></div>
<div class="fi" style="left:3px;top:196px"></div>
<svg style="left:3px;top:196px" width="16" height="15"><path d="M11.5 2.6c-1.6-.5-2.6.2-2.9 1.6L7.2 11.2c-.3 1.4-1.1 1.9-2.6 1.4M5.8 6.3h4.6" stroke="#0a0a3a" stroke-width="1.25" fill="none"/></svg>
<div class="bm fn" style="left:25px;top:197px">__gmon_start__</div>
<div class="bm fs" style="left:322px;top:197px">.plt.go</div>
<div class="fr" style="left:2px;top:210px;"></div>
<div class="fi" style="left:3px;top:210px"></div>
<svg style="left:3px;top:210px" width="16" height="15"><path d="M11.5 2.6c-1.6-.5-2.6.2-2.9 1.6L7.2 11.2c-.3 1.4-1.1 1.9-2.6 1.4M5.8 6.3h4.6" stroke="#0a0a3a" stroke-width="1.25" fill="none"/></svg>
<div class="bm fn" style="left:25px;top:211px">start</div>
<div class="bm fs" style="left:322px;top:211px">.text</div>
<div class="fr" style="left:2px;top:224px;"></div>
<div class="fi" style="left:3px;top:224px"></div>
<svg style="left:3px;top:224px" width="16" height="15"><path d="M11.5 2.6c-1.6-.5-2.6.2-2.9 1.6L7.2 11.2c-.3 1.4-1.1 1.9-2.6 1.4M5.8 6.3h4.6" stroke="#0a0a3a" stroke-width="1.25" fill="none"/></svg>
<div class="bm fn" style="left:25px;top:225px">sub_400830</div>
<div class="bm fs" style="left:322px;top:225px">.text</div>
<div class="fr" style="left:2px;top:238px;"></div>
<div class="fi" style="left:3px;top:238px"></div>
<svg style="left:3px;top:238px" width="16" height="15"><path d="M11.5 2.6c-1.6-.5-2.6.2-2.9 1.6L7.2 11.2c-.3 1.4-1.1 1.9-2.6 1.4M5.8 6.3h4.6" stroke="#0a0a3a" stroke-width="1.25" fill="none"/></svg>
<div class="bm fn" style="left:25px;top:239px">sub_4008B0</div>
<div class="bm fs" style="left:322px;top:239px">.text</div>
<div class="fr" style="left:2px;top:252px;"></div>
<div class="fi" style="left:3px;top:252px"></div>
<svg style="left:3px;top:252px" width="16" height="15"><path d="M11.5 2.6c-1.6-.5-2.6.2-2.9 1.6L7.2 11.2c-.3 1.4-1.1 1.9-2.6 1.4M5.8 6.3h4.6" stroke="#0a0a3a" stroke-width="1.25" fill="none"/></svg>
<div class="bm fn" style="left:25px;top:253px">sub_4008D0</div>
<div class="bm fs" style="left:322px;top:253px">.text</div>
<div class="fr" style="left:2px;top:266px;"></div>
<div class="fi" style="left:3px;top:266px"></div>
<svg style="left:3px;top:266px" width="16" height="15"><path d="M11.5 2.6c-1.6-.5-2.6.2-2.9 1.6L7.2 11.2c-.3 1.4-1.1 1.9-2.6 1.4M5.8 6.3h4.6" stroke="#0a0a3a" stroke-width="1.25" fill="none"/></svg>
<div class="bm fn" style="left:25px;top:267px">sub_400900</div>
<div class="bm fs" style="left:322px;top:267px">.text</div>
<div class="fr" style="left:2px;top:280px;"></div>
<div class="fi" style="left:3px;top:280px"></div>
<svg style="left:3px;top:280px" width="16" height="15"><path d="M11.5 2.6c-1.6-.5-2.6.2-2.9 1.6L7.2 11.2c-.3 1.4-1.1 1.9-2.6 1.4M5.8 6.3h4.6" stroke="#0a0a3a" stroke-width="1.25" fill="none"/></svg>
<div class="bm fn" style="left:25px;top:281px">sub_4009A0</div>
<div class="bm fs" style="left:322px;top:281px">.text</div>
<div class="fr" style="left:2px;top:294px;"></div>
<div class="fi" style="left:3px;top:294px"></div>
<svg style="left:3px;top:294px" width="16" height="15"><path d="M11.5 2.6c-1.6-.5-2.6.2-2.9 1.6L7.2 11.2c-.3 1.4-1.1 1.9-2.6 1.4M5.8 6.3h4.6" stroke="#0a0a3a" stroke-width="1.25" fill="none"/></svg>
<div class="bm fn" style="left:25px;top:295px">sub_400B30</div>
<div class="bm fs" style="left:322px;top:295px">.text</div>
<div class="fr" style="left:2px;top:308px;"></div>
<div class="fi" style="left:3px;top:308px"></div>
<svg style="left:3px;top:308px" width="16" height="15"><path d="M11.5 2.6c-1.6-.5-2.6.2-2.9 1.6L7.2 11.2c-.3 1.4-1.1 1.9-2.6 1.4M5.8 6.3h4.6" stroke="#0a0a3a" stroke-width="1.25" fill="none"/></svg>
<div class="bm fn" style="left:25px;top:309px">sub_4011E0</div>
<div class="bm fs" style="left:322px;top:309px">.text</div>
<div class="fr" style="left:2px;top:322px;"></div>
<div class="fi" style="left:3px;top:322px"></div>
<svg style="left:3px;top:322px" width="16" height="15"><path d="M11.5 2.6c-1.6-.5-2.6.2-2.9 1.6L7.2 11.2c-.3 1.4-1.1 1.9-2.6 1.4M5.8 6.3h4.6" stroke="#0a0a3a" stroke-width="1.25" fill="none"/></svg>
<div class="bm fn" style="left:25px;top:323px">sub_4059A0</div>
<div class="bm fs" style="left:322px;top:323px">.text</div>
<div class="fr" style="left:2px;top:336px;"></div>
<div class="fi" style="left:3px;top:336px"></div>
<svg style="left:3px;top:336px" width="16" height="15"><path d="M11.5 2.6c-1.6-.5-2.6.2-2.9 1.6L7.2 11.2c-.3 1.4-1.1 1.9-2.6 1.4M5.8 6.3h4.6" stroke="#0a0a3a" stroke-width="1.25" fill="none"/></svg>
<div class="bm fn" style="left:25px;top:337px">sub_405BB0</div>
<div class="bm fs" style="left:322px;top:337px">.text</div>
<div class="fr" style="left:2px;top:350px;"></div>
<div class="fi" style="left:3px;top:350px"></div>
<svg style="left:3px;top:350px" width="16" height="15"><path d="M11.5 2.6c-1.6-.5-2.6.2-2.9 1.6L7.2 11.2c-.3 1.4-1.1 1.9-2.6 1.4M5.8 6.3h4.6" stroke="#0a0a3a" stroke-width="1.25" fill="none"/></svg>
<div class="bm fn" style="left:25px;top:351px">sub_405E00</div>
<div class="bm fs" style="left:322px;top:351px">.text</div>
<div class="fr" style="left:2px;top:364px;"></div>
<div class="fi" style="left:3px;top:364px"></div>
<svg style="left:3px;top:364px" width="16" height="15"><path d="M11.5 2.6c-1.6-.5-2.6.2-2.9 1.6L7.2 11.2c-.3 1.4-1.1 1.9-2.6 1.4M5.8 6.3h4.6" stroke="#0a0a3a" stroke-width="1.25" fill="none"/></svg>
<div class="bm fn" style="left:25px;top:365px">sub_405FF0</div>
<div class="bm fs" style="left:322px;top:365px">.text</div>
<div class="fr" style="left:2px;top:378px;"></div>
<div class="fi" style="left:3px;top:378px"></div>
<svg style="left:3px;top:378px" width="16" height="15"><path d="M11.5 2.6c-1.6-.5-2.6.2-2.9 1.6L7.2 11.2c-.3 1.4-1.1 1.9-2.6 1.4M5.8 6.3h4.6" stroke="#0a0a3a" stroke-width="1.25" fill="none"/></svg>
<div class="bm fn" style="left:25px;top:379px">sub_406140</div>
<div class="bm fs" style="left:322px;top:379px">.text</div>
<div class="fr" style="left:2px;top:392px;"></div>
<div class="fi" style="left:3px;top:392px"></div>
<svg style="left:3px;top:392px" width="16" height="15"><path d="M11.5 2.6c-1.6-.5-2.6.2-2.9 1.6L7.2 11.2c-.3 1.4-1.1 1.9-2.6 1.4M5.8 6.3h4.6" stroke="#0a0a3a" stroke-width="1.25" fill="none"/></svg>
<div class="bm fn" style="left:25px;top:393px">start_routine</div>
<div class="bm fs" style="left:322px;top:393px">.text</div>
<div class="fr" style="left:2px;top:406px;"></div>
<div class="fi" style="left:3px;top:406px"></div>
<svg style="left:3px;top:406px" width="16" height="15"><path d="M11.5 2.6c-1.6-.5-2.6.2-2.9 1.6L7.2 11.2c-.3 1.4-1.1 1.9-2.6 1.4M5.8 6.3h4.6" stroke="#0a0a3a" stroke-width="1.25" fill="none"/></svg>
<div class="bm fn" style="left:25px;top:407px">sub_406300</div>
<div class="bm fs" style="left:322px;top:407px">.text</div>
<div class="fr" style="left:2px;top:420px;"></div>
<div class="fi" style="left:3px;top:420px"></div>
<svg style="left:3px;top:420px" width="16" height="15"><path d="M11.5 2.6c-1.6-.5-2.6.2-2.9 1.6L7.2 11.2c-.3 1.4-1.1 1.9-2.6 1.4M5.8 6.3h4.6" stroke="#0a0a3a" stroke-width="1.25" fill="none"/></svg>
<div class="bm fn" style="left:25px;top:421px">sub_406646</div>
<div class="bm fs" style="left:322px;top:421px">.text</div>
<div class="fr" style="left:2px;top:434px;"></div>
<div class="fi" style="left:3px;top:434px"></div>
<svg style="left:3px;top:434px" width="16" height="15"><path d="M11.5 2.6c-1.6-.5-2.6.2-2.9 1.6L7.2 11.2c-.3 1.4-1.1 1.9-2.6 1.4M5.8 6.3h4.6" stroke="#0a0a3a" stroke-width="1.25" fill="none"/></svg>
<div class="bm fn" style="left:25px;top:435px">sub_406991</div>
<div class="bm fs" style="left:322px;top:435px">.text</div>
<div class="fr" style="left:2px;top:448px;"></div>
<div class="fi" style="left:3px;top:448px"></div>
<svg style="left:3px;top:448px" width="16" height="15"><path d="M11.5 2.6c-1.6-.5-2.6.2-2.9 1.6L7.2 11.2c-.3 1.4-1.1 1.9-2.6 1.4M5.8 6.3h4.6" stroke="#0a0a3a" stroke-width="1.25" fill="none"/></svg>
<div class="bm fn" style="left:25px;top:449px">sub_406996</div>
<div class="bm fs" style="left:322px;top:449px">.text</div>
<div class="fr" style="left:2px;top:462px;"></div>
<div class="fi" style="left:3px;top:462px"></div>
<svg style="left:3px;top:462px" width="16" height="15"><path d="M11.5 2.6c-1.6-.5-2.6.2-2.9 1.6L7.2 11.2c-.3 1.4-1.1 1.9-2.6 1.4M5.8 6.3h4.6" stroke="#0a0a3a" stroke-width="1.25" fill="none"/></svg>
<div class="bm fn" style="left:25px;top:463px">init</div>
<div class="bm fs" style="left:322px;top:463px">.text</div>
<div class="fr" style="left:2px;top:476px;"></div>
<div class="fi" style="left:3px;top:476px"></div>
<svg style="left:3px;top:476px" width="16" height="15"><path d="M11.5 2.6c-1.6-.5-2.6.2-2.9 1.6L7.2 11.2c-.3 1.4-1.1 1.9-2.6 1.4M5.8 6.3h4.6" stroke="#0a0a3a" stroke-width="1.25" fill="none"/></svg>
<div class="bm fn" style="left:25px;top:477px">fini</div>
<div class="bm fs" style="left:322px;top:477px">.text</div>
<div class="fr" style="left:2px;top:490px;"></div>
<div class="fi" style="left:3px;top:490px"></div>
<svg style="left:3px;top:490px" width="16" height="15"><path d="M11.5 2.6c-1.6-.5-2.6.2-2.9 1.6L7.2 11.2c-.3 1.4-1.1 1.9-2.6 1.4M5.8 6.3h4.6" stroke="#0a0a3a" stroke-width="1.25" fill="none"/></svg>
<div class="bm fn" style="left:25px;top:491px">_term_proc</div>
<div class="bm fs" style="left:322px;top:491px">.fini</div>
<div class="fr" style="left:2px;top:504px;background:#ffe6ff;"></div>
<div class="fi" style="left:3px;top:504px"></div>
<svg style="left:3px;top:504px" width="16" height="15"><path d="M11.5 2.6c-1.6-.5-2.6.2-2.9 1.6L7.2 11.2c-.3 1.4-1.1 1.9-2.6 1.4M5.8 6.3h4.6" stroke="#0a0a3a" stroke-width="1.25" fill="none"/></svg>
<div class="bm fn b" style="left:25px;top:505px">pthread_create</div>
<div class="bm fs b" style="left:322px;top:505px">extern</div>
<div class="fr" style="left:2px;top:518px;background:#ffe6ff;"></div>
<div class="fi" style="left:3px;top:518px"></div>
<svg style="left:3px;top:518px" width="16" height="15"><path d="M11.5 2.6c-1.6-.5-2.6.2-2.9 1.6L7.2 11.2c-.3 1.4-1.1 1.9-2.6 1.4M5.8 6.3h4.6" stroke="#0a0a3a" stroke-width="1.25" fill="none"/></svg>
<div class="bm fn b" style="left:25px;top:519px">puts</div>
<div class="bm fs b" style="left:322px;top:519px">extern</div>
<div class="fr" style="left:2px;top:532px;background:#ffe6ff;"></div>
<div class="fi" style="left:3px;top:532px"></div>
<svg style="left:3px;top:532px" width="16" height="15"><path d="M11.5 2.6c-1.6-.5-2.6.2-2.9 1.6L7.2 11.2c-.3 1.4-1.1 1.9-2.6 1.4M5.8 6.3h4.6" stroke="#0a0a3a" stroke-width="1.25" fill="none"/></svg>
<div class="bm fn b" style="left:25px;top:533px">strlen</div>
<div class="bm fs b" style="left:322px;top:533px">extern</div>
<div class="fr" style="left:2px;top:546px;background:#ffe6ff;"></div>
<div class="fi" style="left:3px;top:546px"></div>
<svg style="left:3px;top:546px" width="16" height="15"><path d="M11.5 2.6c-1.6-.5-2.6.2-2.9 1.6L7.2 11.2c-.3 1.4-1.1 1.9-2.6 1.4M5.8 6.3h4.6" stroke="#0a0a3a" stroke-width="1.25" fill="none"/></svg>
<div class="bm fn b" style="left:25px;top:547px">printf</div>
<div class="bm fs b" style="left:322px;top:547px">extern</div>
<div class="fr" style="left:2px;top:560px;background:#ffe6ff;"></div>
<div class="fi" style="left:3px;top:560px"></div>
<svg style="left:3px;top:560px" width="16" height="15"><path d="M11.5 2.6c-1.6-.5-2.6.2-2.9 1.6L7.2 11.2c-.3 1.4-1.1 1.9-2.6 1.4M5.8 6.3h4.6" stroke="#0a0a3a" stroke-width="1.25" fill="none"/></svg>
<div class="bm fn b" style="left:25px;top:561px">memset</div>
<div class="bm fs b" style="left:322px;top:561px">extern</div>
<div class="fr" style="left:2px;top:574px;background:#ffe6ff;"></div>
<div class="fi" style="left:3px;top:574px"></div>
<svg style="left:3px;top:574px" width="16" height="15"><path d="M11.5 2.6c-1.6-.5-2.6.2-2.9 1.6L7.2 11.2c-.3 1.4-1.1 1.9-2.6 1.4M5.8 6.3h4.6" stroke="#0a0a3a" stroke-width="1.25" fill="none"/></svg>
<div class="bm fn b" style="left:25px;top:575px">strncat</div>
<div class="bm fs b" style="left:322px;top:575px">extern</div>
<div class="fr" style="left:2px;top:588px;background:#ffe6ff;"></div>
<div class="fi" style="left:3px;top:588px"></div>
<svg style="left:3px;top:588px" width="16" height="15"><path d="M11.5 2.6c-1.6-.5-2.6.2-2.9 1.6L7.2 11.2c-.3 1.4-1.1 1.9-2.6 1.4M5.8 6.3h4.6" stroke="#0a0a3a" stroke-width="1.25" fill="none"/></svg>
<div class="bm fn b" style="left:25px;top:589px">__libc_start_main</div>
<div class="bm fs b" style="left:322px;top:589px">extern</div>
</div>
<div style="left:1px;top:771px;width:381px;height:16px;background:#f0f0f0"></div>
<div style="left:18px;top:779px;width:122px;height:2px;background:#888"></div>
<svg style="left:3px;top:792px" width="14" height="14"><path d="M2 2L12 12M12 2L2 12" stroke="#2a60d0" stroke-width="3"/><path d="M2 2L12 12M12 2L2 12" stroke="#7ab0ff" stroke-width="1"/></svg>
<div style="left:24px;top:790px;width:358px;height:19px;background:#fff;border-bottom:1px solid #a0a0a0"></div>
<div style="left:387px;top:122px;width:1533px;height:22px;background:#f2f2f2;border-bottom:1px solid #a6a6a6;border-top:1px solid #e6e6e6;border-left:1px solid #e6e6e6"></div>
<svg style="left:399px;top:124px" width="18" height="18" viewBox="0 0 18 18"><rect x="0.5" y="0.5" width="13" height="13" rx="0.8" fill="url(#wBody)" stroke="url(#wEdge)" stroke-width="1.1"/><rect x="1" y="1" width="12" height="2.2" fill="url(#wTitle)"/><rect x="5.6" y="3.6" width="10.8" height="12.8" rx="0.6" fill="#fff" stroke="url(#dEdge)" stroke-width="1.2"/><path d="M7.5 5.8H11" stroke="#505a66" stroke-width="1"/><path d="M9.5 7.699999999999999H13.5" stroke="#505a66" stroke-width="1"/><path d="M9.5 9.6H13.5" stroke="#505a66" stroke-width="1"/><path d="M7.5 11.5H11" stroke="#505a66" stroke-width="1"/><path d="M9.5 13.399999999999999H13.5" stroke="#505a66" stroke-width="1"/></svg>
<div class="bm" style="left:465.5px;top:125.5px;font-size:11.5px;letter-spacing:0px;transform:scaleX(0.87);transform-origin:0 0;line-height:15px">IDA View-A</div>
<div style="left:578.0px;top:126px;width:14px;height:14px;border-radius:2px;background:#b8b8b8;border:1px solid #9e9e9e"></div>
<svg style="left:578.0px;top:126px" width="14" height="14"><path d="M4 4L10 10M10 4L4 10" stroke="#fff" stroke-width="2"/></svg>
<div style="left:603.5px;top:120px;width:222.0px;height:25px;background:#f7f7f7;border-top:1px solid #e4e4e4"></div>
<svg style="left:618px;top:123px" width="18" height="18" viewBox="0 0 18 18"><rect x="0.5" y="0.5" width="13" height="13" rx="0.8" fill="url(#wBody)" stroke="url(#wEdge)" stroke-width="1.1"/><rect x="1" y="1" width="12" height="2.2" fill="url(#wTitle)"/><rect x="5.6" y="3.6" width="10.8" height="12.8" rx="0.6" fill="#fff" stroke="url(#dEdge)" stroke-width="1.2"/><path d="M7.5 5.8H11" stroke="#505a66" stroke-width="1"/><path d="M9.5 7.699999999999999H13.5" stroke="#505a66" stroke-width="1"/><path d="M9.5 9.6H13.5" stroke="#505a66" stroke-width="1"/><path d="M7.5 11.5H11" stroke="#505a66" stroke-width="1"/><path d="M9.5 13.399999999999999H13.5" stroke="#505a66" stroke-width="1"/></svg>
<div class="bm" style="left:678.5px;top:125.5px;font-size:11.5px;letter-spacing:0px;transform:scaleX(0.87);transform-origin:0 0;line-height:15px">Pseudocode-A</div>
<div style="left:797.0px;top:125px;width:14px;height:14px;border-radius:2px;background:#e0613f;border:1px solid #c85030"></div>
<svg style="left:797.0px;top:125px" width="14" height="14"><path d="M4 4L10 10M10 4L4 10" stroke="#fff" stroke-width="2"/></svg>
<svg style="left:837px;top:124px" width="18" height="18" viewBox="0 0 18 18"><rect x="0.5" y="0.5" width="14" height="14" rx="0.8" fill="url(#wBody)" stroke="url(#wEdge)" stroke-width="1.1"/><rect x="1" y="1" width="13" height="2.2" fill="url(#wTitle)"/><path d="M7.5 4.5l3.6 2v4l-3.6 2-3.6-2v-4z" fill="#dbe9fb" stroke="#2020ff" stroke-width="1.1"/></svg>
<div class="bm" style="left:903.5px;top:125.5px;font-size:11.5px;letter-spacing:0px;transform:scaleX(0.87);transform-origin:0 0;line-height:15px">Hex View-1</div>
<div style="left:1016.0px;top:126px;width:14px;height:14px;border-radius:2px;background:#b8b8b8;border:1px solid #9e9e9e"></div>
<svg style="left:1016.0px;top:126px" width="14" height="14"><path d="M4 4L10 10M10 4L4 10" stroke="#fff" stroke-width="2"/></svg>
<div class="sep" style="left:1043.0px;top:124px;height:19px;background:#dedede"></div>
<svg style="left:1056px;top:124px" width="18" height="18" viewBox="0 0 18 18"><rect x="0.5" y="0.5" width="14" height="14" rx="0.8" fill="url(#wBody)" stroke="url(#wEdge)" stroke-width="1.1"/><rect x="1" y="1" width="13" height="2.2" fill="url(#wTitle)"/><path d="M4.5 12.5l2-8h2l2 8M6 7h3M5.6 10.5l3.5-3" stroke="#0a2a5a" stroke-width="1.2" fill="none"/></svg>
<div class="bm" style="left:1122.5px;top:125.5px;font-size:11.5px;letter-spacing:0px;transform:scaleX(0.87);transform-origin:0 0;line-height:15px">Structures</div>
<div style="left:1235.0px;top:126px;width:14px;height:14px;border-radius:2px;background:#b8b8b8;border:1px solid #9e9e9e"></div>
<svg style="left:1235.0px;top:126px" width="14" height="14"><path d="M4 4L10 10M10 4L4 10" stroke="#fff" stroke-width="2"/></svg>
<div class="sep" style="left:1262.0px;top:124px;height:19px;background:#dedede"></div>
<svg style="left:1275px;top:124px" width="18" height="18" viewBox="0 0 18 18"><rect x="0.5" y="0.5" width="15" height="14" rx="0.8" fill="url(#wBody)" stroke="url(#wEdge)" stroke-width="1.1"/><rect x="1" y="1" width="14" height="2.2" fill="url(#wTitle)"/><path d="M7.5 3.0v3M6 4.5h3" stroke="#002080" stroke-width="1.2"/><rect x="7" y="4.0" width="1" height="1" fill="#20ffff"/><path d="M10 4.5h3" stroke="#0050c0" stroke-width="1.2"/><path d="M7.5 7.0v3M6 8.5h3" stroke="#002080" stroke-width="1.2"/><rect x="7" y="8.0" width="1" height="1" fill="#20ffff"/><path d="M10 8.5h3" stroke="#0050c0" stroke-width="1.2"/><path d="M7.5 11.0v3M6 12.5h3" stroke="#002080" stroke-width="1.2"/><rect x="7" y="12.0" width="1" height="1" fill="#20ffff"/><path d="M10 12.5h3" stroke="#0050c0" stroke-width="1.2"/></svg>
<div class="bm" style="left:1356.5px;top:125.5px;font-size:11.5px;letter-spacing:0px;transform:scaleX(0.87);transform-origin:0 0;line-height:15px">Enums</div>
<div style="left:1454.0px;top:126px;width:14px;height:14px;border-radius:2px;background:#b8b8b8;border:1px solid #9e9e9e"></div>
<svg style="left:1454.0px;top:126px" width="14" height="14"><path d="M4 4L10 10M10 4L4 10" stroke="#fff" stroke-width="2"/></svg>
<div class="sep" style="left:1481.0px;top:124px;height:19px;background:#dedede"></div>
<svg style="left:1494px;top:124px" width="18" height="18" viewBox="0 0 18 18"><rect x="0.5" y="0.5" width="14" height="14" rx="0.8" fill="url(#wBody)" stroke="url(#wEdge)" stroke-width="1.1"/><rect x="1" y="1" width="13" height="2.2" fill="url(#wTitle)"/><rect x="6.6" y="5.6" width="10.8" height="9.8" rx="0.6" fill="#fff" stroke="url(#dEdge)" stroke-width="1.2"/><path d="M9 7.5h3.5" stroke="#0000b0" stroke-width="1.1"/><path d="M9 9.5h3.5" stroke="#0000b0" stroke-width="1.1"/><path d="M9 11.5h3.5" stroke="#0000b0" stroke-width="1.1"/><path d="M9 13.5h3.5" stroke="#0000b0" stroke-width="1.1"/><path d="M1.5 5.5l4 2 1-2 3 3-3 3-1-2-2 1z" fill="#20d030" stroke="#003a10" stroke-width="0.9"/></svg>
<div class="bm" style="left:1569.5px;top:125.5px;font-size:11.5px;letter-spacing:0px;transform:scaleX(0.87);transform-origin:0 0;line-height:15px">Imports</div>
<div style="left:1673.0px;top:126px;width:14px;height:14px;border-radius:2px;background:#b8b8b8;border:1px solid #9e9e9e"></div>
<svg style="left:1673.0px;top:126px" width="14" height="14"><path d="M4 4L10 10M10 4L4 10" stroke="#fff" stroke-width="2"/></svg>
<div class="sep" style="left:1700.0px;top:124px;height:19px;background:#dedede"></div>
<svg style="left:1713px;top:124px" width="18" height="18" viewBox="0 0 18 18"><rect x="2.5" y="0.5" width="14" height="14" rx="0.8" fill="url(#wBody)" stroke="url(#wEdge)" stroke-width="1.1"/><rect x="3" y="1" width="13" height="2.2" fill="url(#wTitle)"/><rect x="0.6" y="4.6" width="10.8" height="10.8" rx="0.6" fill="#fff" stroke="url(#dEdge)" stroke-width="1.2"/><path d="M2.5 6.5h4" stroke="#0000b0" stroke-width="1.1"/><path d="M2.5 8.5h4" stroke="#0000b0" stroke-width="1.1"/><path d="M2.5 10.5h4" stroke="#0000b0" stroke-width="1.1"/><path d="M2.5 12.5h4" stroke="#0000b0" stroke-width="1.1"/><path d="M6.5 9.5l2-3h2v-2l4 3.5-4 3.5v-2h-2z" fill="#20d030" stroke="#003a10" stroke-width="0.9"/></svg>
<div class="bm" style="left:1788.5px;top:125.5px;font-size:11.5px;letter-spacing:0px;transform:scaleX(0.87);transform-origin:0 0;line-height:15px">Exports</div>
<div style="left:1892.0px;top:126px;width:14px;height:14px;border-radius:2px;background:#b8b8b8;border:1px solid #9e9e9e"></div>
<svg style="left:1892.0px;top:126px" width="14" height="14"><path d="M4 4L10 10M10 4L4 10" stroke="#fff" stroke-width="2"/></svg>
<div style="left:387px;top:144px;width:1533px;height:687px;background:#fff"></div>
<div style="left:443px;top:144px;width:5px;height:687px;background:#f0f0f0"></div>
<div style="left:1903px;top:144px;width:17px;height:687px;background:#f0f0f0"></div>
<div style="left:1910px;top:416px;width:2px;height:105px;background:#888"></div>
<div style="left:448px;top:439px;width:1454px;height:21px;background:#e6e6e6"></div>
<div style="left:387px;top:144px;width:1516px;height:649px;overflow:hidden">
<div class="ln" style="left:1px;top:4px">73</div>
<div class="cl" style="left:61px;top:4px"><span class="k">LABEL_29:</span></div>
<div class="ln" style="left:1px;top:25px">74</div>
<div class="dot" style="left:7px;top:26px"></div>
<div class="cl" style="left:61px;top:25px"><span class="k">      </span><span class="k"><i class="st">*</i>(</span><span class="ty">_DWORD <i class="st">*</i></span><span class="k">)(</span><span class="o">v17</span><span class="k"> − 808) = </span><span class="f">puts</span><span class="k">(</span><span class="v">v22</span><span class="k">);</span></div>
<div class="ln" style="left:1px;top:46px">75</div>
<div class="cl" style="left:61px;top:46px"><span class="k">    }</span></div>
<div class="ln" style="left:1px;top:67px">76</div>
<div class="cl" style="left:61px;top:67px"><span class="k">  }</span></div>
<div class="ln" style="left:1px;top:88px">77</div>
<div class="cl" style="left:61px;top:88px"><span class="k">  else</span></div>
<div class="ln" style="left:1px;top:109px">78</div>
<div class="cl" style="left:61px;top:109px"><span class="k">  {</span></div>
<div class="ln" style="left:1px;top:130px">79</div>
<div class="dot" style="left:7px;top:131px"></div>
<div class="cl" style="left:61px;top:130px"><span class="k">    if ( !((</span><span class="f">dword_6080F4</span><span class="k"> &lt; 10) ^ (((((</span><span class="ty">_BYTE</span><span class="k">)</span><span class="f">dword_608138</span><span class="k"> − 1) <i class="st">*</i> (</span><span class="ty">_BYTE</span><span class="k">)</span><span class="f">dword_608138</span><span class="k">) &amp; 1) == 0) | (</span><span class="f">dword_6080F4</span><span class="k"> &lt; 10</span></div>
<div class="ln" style="left:1px;top:151px">80</div>
<div class="cl" style="left:61px;top:151px"><span class="k">                                                                                                &amp;&amp; ((((</span><span class="ty">_BYTE</span><span class="k">)</span><span class="f">dword_608138</span><span class="k"> − 1) <i class="st">*</i> (</span><span class="ty">_BYTE</span><span class="k">)</span><span class="f">dword_608138</span><span class="k">) &amp; 1) == 0))</span></div>
<div class="ln" style="left:1px;top:172px">81</div>
<div class="dot" style="left:7px;top:173px"></div>
<div class="cl" style="left:61px;top:172px"><span class="k">      goto LABEL_11;</span></div>
<div class="ln" style="left:1px;top:193px">82</div>
<div class="dot" style="left:7px;top:194px"></div>
<div class="cl" style="left:61px;top:193px"><span class="k">    while ( 1 )</span></div>
<div class="ln" style="left:1px;top:214px">83</div>
<div class="cl" style="left:61px;top:214px"><span class="k">    {</span></div>
<div class="ln" style="left:1px;top:235px">84</div>
<div class="dot" style="left:7px;top:236px"></div>
<div class="cl" style="left:61px;top:235px"><span class="k">      </span><span class="k"><i class="st">*</i>(</span><span class="ty">_DWORD <i class="st">*</i></span><span class="k">)(</span><span class="o">v17</span><span class="k"> − 376) = 0;</span></div>
<div class="ln" style="left:1px;top:256px">85</div>
<div class="dot" style="left:7px;top:257px"></div>
<div class="cl" style="left:61px;top:256px"><span class="k">      </span><span class="k"><i class="st">*</i>(</span><span class="ty">_DWORD <i class="st">*</i></span><span class="k">)(</span><span class="o">v17</span><span class="k"> − 548) = </span><span class="f">puts</span><span class="k">(</span><span class="s">&quot;Welcome Animal shop&quot;</span><span class="k">);</span></div>
<div class="ln" style="left:1px;top:277px">86</div>
<div class="dot" style="left:7px;top:278px"></div>
<div class="cl" style="left:61px;top:277px"><span class="k">      </span><span class="f">sub_400900</span><span class="k">();</span></div>
<div class="ln" style="left:1px;top:298px">87</div>
<div class="dot" style="left:7px;top:299px"></div>
<div class="cl" style="left:61px;top:298px"><span class="k">      </span><span class="v">v27</span><span class="k"> = </span><span class="s">&quot;%d&quot;</span><span class="k">;</span></div>
<div class="ln" style="left:1px;top:319px">88</div>
<div class="dot" style="left:7px;top:320px"></div>
<div class="cl" style="left:61px;top:319px"><span class="k">      </span><span class="k"><i class="st">*</i>(</span><span class="ty">_DWORD <i class="st">*</i></span><span class="k">)(</span><span class="o">v17</span><span class="k"> − 552) = </span><span class="f">printf</span><span class="k">(</span><span class="s">&quot;Please input my favorite animal: &quot;</span><span class="k">);</span></div>
<div class="ln" style="left:1px;top:340px">89</div>
<div class="dot" style="left:7px;top:341px"></div>
<div class="cl" style="left:61px;top:340px"><span class="k">      </span><span class="v">v0</span><span class="k"> = </span><span class="f">__isoc99_scanf</span><span class="k">(</span><span class="s">&quot;%d&quot;</span><span class="k">, </span><span class="o">v17</span><span class="k"> − 376);</span></div>
<div class="ln" style="left:1px;top:361px">90</div>
<div class="dot" style="left:7px;top:362px"></div>
<div class="cl" style="left:61px;top:361px"><span class="k">      </span><span class="v">v1</span><span class="k"> = </span><span class="k"><i class="st">*</i>(</span><span class="ty">_DWORD <i class="st">*</i></span><span class="k">)(</span><span class="o">v17</span><span class="k"> − 376);</span></div>
<div class="ln" style="left:1px;top:382px">91</div>
<div class="dot" style="left:7px;top:383px"></div>
<div class="cl" style="left:61px;top:382px"><span class="k">      </span><span class="v">v2</span><span class="k"> = ((</span><span class="f">dword_6080F4</span><span class="k"> &lt; 10 &amp;&amp; ((((</span><span class="ty">_BYTE</span><span class="k">)</span><span class="f">dword_608138</span><span class="k"> − 1) <i class="st">*</i> (</span><span class="ty">_BYTE</span><span class="k">)</span><span class="f">dword_608138</span><span class="k">) &amp; 1) == 0) | (</span><span class="f">dword_6080F4</span><span class="k"> &lt; 10) ^ (((((</span><span class="ty">_BYTE</span><span class="k">)</span><span class="f">dword_608138</span><span class="k"> − 1) <i class="st">*</i> (</span><span class="ty">_BYTE</span><span class="k">)</span><span class="f">dword_608138</span><span class="k">) &amp; 1) == 0))</span></div>
<div class="ln" style="left:1px;top:403px">92</div>
<div class="dot" style="left:7px;top:404px"></div>
<div class="cl" style="left:61px;top:403px"><span class="k">      </span><span class="k"><i class="st">*</i>(</span><span class="ty">_DWORD <i class="st">*</i></span><span class="k">)(</span><span class="o">v17</span><span class="k"> − 556) = </span><span class="v">v0</span><span class="k">;</span></div>
<div class="ln" style="left:1px;top:424px">93</div>
<div class="dot" style="left:7px;top:425px"></div>
<div class="cl" style="left:61px;top:424px"><span class="k">      </span><span class="k"><i class="st">*</i>(</span><span class="ty">_DWORD <i class="st">*</i></span><span class="k">)(</span><span class="o">v17</span><span class="k"> − 560) = </span><span class="v">v1</span><span class="k">;</span></div>
<div class="ln" style="left:1px;top:445px">94</div>
<div class="dot" style="left:7px;top:446px"></div>
<div class="cl" style="left:61px;top:445px"><span class="k">      if ( !</span><span class="v">v2</span><span class="k"> )</span></div>
<div class="ln" style="left:1px;top:466px">95</div>
<div class="dot" style="left:7px;top:467px"></div>
<div class="cl" style="left:61px;top:466px"><span class="k">        break;</span></div>
<div class="ln" style="left:1px;top:487px">96</div>
<div class="cl" style="left:61px;top:487px"><span class="k">LABEL_11:</span></div>
<div class="ln" style="left:1px;top:508px">97</div>
<div class="dot" style="left:7px;top:509px"></div>
<div class="cl" style="left:61px;top:508px"><span class="k">      </span><span class="k"><i class="st">*</i>(</span><span class="ty">_DWORD <i class="st">*</i></span><span class="k">)(</span><span class="o">v17</span><span class="k"> − 376) = 0;</span></div>
<div class="ln" style="left:1px;top:529px">98</div>
<div class="dot" style="left:7px;top:530px"></div>
<div class="cl" style="left:61px;top:529px"><span class="k">      </span><span class="k"><i class="st">*</i>(</span><span class="ty">_DWORD <i class="st">*</i></span><span class="k">)(</span><span class="o">v17</span><span class="k"> − 768) = </span><span class="f">puts</span><span class="k">(</span><span class="s">&quot;Welcome Animal shop&quot;</span><span class="k">);</span></div>
<div class="ln" style="left:1px;top:550px">99</div>
<div class="dot" style="left:7px;top:551px"></div>
<div class="cl" style="left:61px;top:550px"><span class="k">      </span><span class="f">sub_400900</span><span class="k">();</span></div>
<div class="ln" style="left:1px;top:571px">100</div>
<div class="dot" style="left:7px;top:572px"></div>
<div class="cl" style="left:61px;top:571px"><span class="k">      </span><span class="k"><i class="st">*</i>(</span><span class="ty">_DWORD <i class="st">*</i></span><span class="k">)(</span><span class="o">v17</span><span class="k"> − 772) = </span><span class="f">printf</span><span class="k">(</span><span class="s">&quot;Please input my favorite animal: &quot;</span><span class="k">);</span></div>
<div class="ln" style="left:1px;top:592px">101</div>
<div class="dot" style="left:7px;top:593px"></div>
<div class="cl" style="left:61px;top:592px"><span class="k">      </span><span class="k"><i class="st">*</i>(</span><span class="ty">_DWORD <i class="st">*</i></span><span class="k">)(</span><span class="o">v17</span><span class="k"> − 776) = </span><span class="f">__isoc99_scanf</span><span class="k">(</span><span class="s">&quot;%d&quot;</span><span class="k">, </span><span class="o">v17</span><span class="k"> − 376);</span></div>
<div class="ln" style="left:1px;top:613px">102</div>
<div class="cl" style="left:61px;top:613px"><span class="k">    }</span></div>
<div class="cl" style="left:61px;top:634px"><span class="k">    </span><span class="v">v3</span><span class="k"> = </span><span class="k"><i class="st">*</i>(</span><span class="ty">_DWORD <i class="st">*</i></span><span class="k">)(</span><span class="o">v17</span><span class="k"> − 560);</span></div>
</div>
<div style="left:448px;top:793px;width:1455px;height:20px;background:#f0f0f0"></div>
<div class="bm" style="left:450px;top:797px;font-size:11px;letter-spacing:0.2px;line-height:15px">000064F2</div>
<div style="left:507px;top:796px;width:1px;height:15px;background:#d0d0d0"></div>
<div class="bm" style="left:512px;top:797px;font-size:11px;letter-spacing:0.3px;line-height:15px">sub_406996:87 (4064F2)</div>
<div style="left:667px;top:796px;width:1px;height:15px;background:#d0d0d0"></div>
<div style="left:680px;top:796px;width:1px;height:15px;background:#d0d0d0"></div>
<div style="left:448px;top:813px;width:1472px;height:18px;background:#f0f0f0;border-bottom:1px solid #a8a8a8;border-top:1px solid #fafafa"></div>
<div style="left:465px;top:821px;width:992px;height:2px;background:#888"></div>
<div style="left:0;top:836px;width:1920px;height:29px;background:#efefef;border:1px solid #7d838b"></div>
<svg style="left:5px;top:841px" width="18" height="18" viewBox="0 0 18 18"><rect x="0.5" y="0.5" width="13" height="15" fill="#f4f8ff" stroke="#6a727a" stroke-width="1"/><rect x="0.5" y="0.5" width="13" height="2.8" fill="url(#wTitle)"/><path d="M3 6.5h8" stroke="#5a646e" stroke-width="1"/><path d="M3 8.5h8" stroke="#5a646e" stroke-width="1"/><path d="M3 10.5h8" stroke="#5a646e" stroke-width="1"/><path d="M3 12.5h8" stroke="#5a646e" stroke-width="1"/></svg>
<div class="bm" style="left:25px;top:841px;font-size:11.5px;letter-spacing:0px;transform:scaleX(0.87);transform-origin:0 0;line-height:16px">Output</div>
<div style="left:1848px;top:845px;width:11px;height:10px;border:1px solid #333;border-top:2px solid #333"></div>
<div style="left:1876px;top:848px;width:6px;height:6px;border:1px solid #333"></div>
<div style="left:1878px;top:845px;width:7px;height:6px;border-top:2px solid #333;border-right:1px solid #333"></div>
<svg style="left:1901px;top:845px" width="10" height="10"><path d="M1.5 1.5L8.5 8.5M8.5 1.5L1.5 8.5" stroke="#3a3a3a" stroke-width="2.1"/></svg>
<div style="left:0;top:867px;width:1920px;height:120px;background:#fff;border:1px solid #7d838b"></div>
<div style="left:1902px;top:868px;width:17px;height:118px;background:#f0f0f0"></div>
<div style="left:1909px;top:951px;width:2px;height:18px;background:#888"></div>
<div class="out" style="top:868px">Command &quot;MakeCode&quot; failed</div>
<div class="out" style="top:883px">.text:0000000000406944: The function has undefined instruction/data at the specified address.</div>
<div class="out" style="top:898px">Your request has been put in the autoanalysis queue.</div>
<div class="out" style="top:913px">.text:0000000000406944: The function has undefined instruction/data at the specified address.</div>
<div class="out" style="top:928px">Your request has been put in the autoanalysis queue.</div>
<div class="out" style="top:943px">Command &quot;JumpOpXref&quot; failed</div>
<div class="out" style="top:958px">406991: using guessed type __int64 __fastcall sub_406991();</div>
<div class="out" style="top:973px">406996: using guessed type __int64 sub_406996(void);</div>
<div style="left:3px;top:990px;width:44px;height:20px;background:#fbfbfb;border:1px solid #d5d5d5;border-radius:3px"></div>
<div class="bm" style="left:7px;top:993px;font-size:11.5px;letter-spacing:0px;transform:scaleX(0.87);transform-origin:0 0;line-height:15px">Python</div>
<div style="left:53px;top:990px;width:1864px;height:20px;background:#fff;border-bottom:1px solid #8a8a8a;border-top:1px solid #f4f4f4"></div>
<div class="bm" style="left:2px;top:1016px;font-size:11px;letter-spacing:0.4px;line-height:15px">AU:</div>
<div class="bm" style="left:37px;top:1016px;font-size:11px;letter-spacing:0.4px;line-height:15px">idle</div>
<div style="left:80px;top:1014px;width:1px;height:17px;background:#d6d6d6"></div>
<div class="bm" style="left:85px;top:1016px;font-size:11px;letter-spacing:0.4px;line-height:15px">Down</div>
<div style="left:156px;top:1014px;width:1px;height:17px;background:#d6d6d6"></div>
<div class="bm" style="left:161px;top:1016px;font-size:11px;letter-spacing:0.4px;line-height:15px">Disk: 156GB</div>
<div style="left:239px;top:1014px;width:1px;height:17px;background:#d6d6d6"></div>
<div style="left:0;top:1031px;width:1920px;height:1px;background:#c8c8c8"></div>
<div style="left:0;top:1032px;width:1920px;height:8px;background:linear-gradient(90deg,#e2dce6 0%,#dfe4ef 15%,#dde6f4 40%,#dfe6f2 70%,#e6e4ec 100%)"></div>
<!--REST-->
</body></html>
